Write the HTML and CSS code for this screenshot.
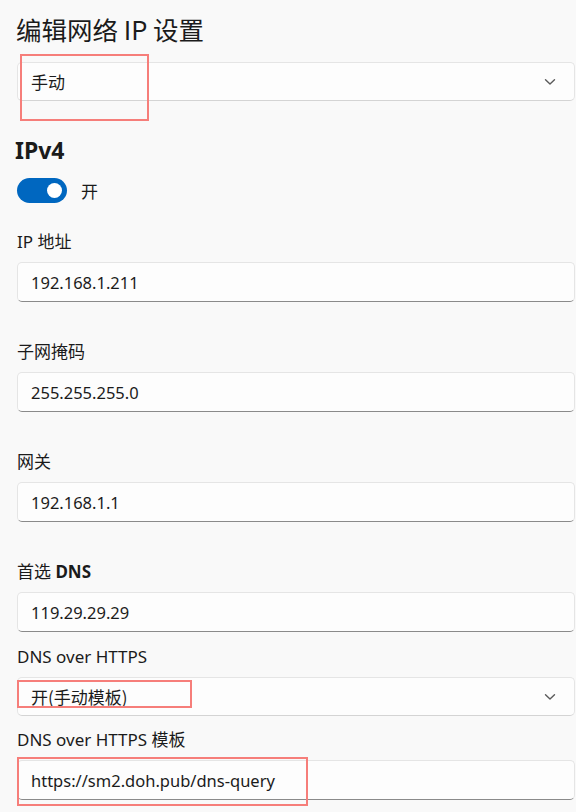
FILE: index.html
```html
<!DOCTYPE html>
<html lang="zh-CN">
<head>
<meta charset="utf-8">
<title>编辑网络 IP 设置</title>
<link rel="stylesheet" href="styles.css">
</head>
<body>
<div class="page">
  <h1 class="title">编辑网络 IP 设置</h1>
  <div class="combo combo-top">
    <span class="combo-text">手动</span>
    <svg class="chev" width="12" height="8" viewBox="0 0 12 8"><path d="M1.5 1.8 L6 6 L10.5 1.8" fill="none" stroke="#5a5a5a" stroke-width="1.4" stroke-linecap="round" stroke-linejoin="round"/></svg>
  </div>

  <h2 class="section">IPv4</h2>
  <div class="toggle-row">
    <span class="toggle"><span class="knob"></span></span>
    <span class="toggle-label">开</span>
  </div>

  <div class="field field-first">
    <div class="label">IP 地址</div>
    <div class="input">192.168.1.211</div>
  </div>
  <div class="field">
    <div class="label">子网掩码</div>
    <div class="input">255.255.255.0</div>
  </div>
  <div class="field">
    <div class="label">网关</div>
    <div class="input">192.168.1.1</div>
  </div>
  <div class="field">
    <div class="label">首选 <b>DNS</b></div>
    <div class="input">119.29.29.29</div>
  </div>
  <div class="field field-tight">
    <div class="label">DNS over HTTPS</div>
    <div class="combo">
      <span class="combo-text">开(手动模板)</span>
      <svg class="chev" width="12" height="8" viewBox="0 0 12 8"><path d="M1.5 1.8 L6 6 L10.5 1.8" fill="none" stroke="#5a5a5a" stroke-width="1.4" stroke-linecap="round" stroke-linejoin="round"/></svg>
    </div>
  </div>
  <div class="field field-last">
    <div class="label">DNS over HTTPS 模板</div>
    <div class="input">https://sm2.doh.pub/dns-query</div>
  </div>
</div>

<div class="mark mark-1"></div>
<div class="mark mark-2"></div>
<div class="mark mark-3"></div>
</body>
</html>
```

FILE: styles.css
```css
html, body {
  margin: 0;
  padding: 0;
  background: #f9f9f9;
}
body {
  font-family: "Noto Sans", "Noto Sans CJK SC", sans-serif;
  color: #1b1b1b;
  width: 576px;
  height: 812px;
  overflow: hidden;
  position: relative;
}
.page {
  padding: 10px 1px 0 17px;
  display: flex;
  flex-direction: column;
}
.title {
  margin: 0 0 0 -1px;
  font-family: "Noto Sans CJK SC", sans-serif;
  font-size: 25.5px;
  font-weight: 400;
  line-height: 38px;
  height: 38px;
}
.combo, .input {
  box-sizing: border-box;
  background: #fdfdfd;
  border: 1px solid #e5e5e5;
  border-radius: 5px;
  display: flex;
  align-items: center;
  padding: 0 0 0 13px;
  font-size: 16.5px;
  font-family: "Noto Sans", "Noto Sans CJK SC", sans-serif;
  color: #1b1b1b;
}
.combo {
  height: 39px;
  justify-content: space-between;
  padding-right: 18px;
  border-bottom-color: #d4d4d4;
}
.combo-top {
  margin-top: 14px;
}
.combo-text {
  font-family: "Noto Sans CJK SC", sans-serif;
  font-size: 17px;
}
.input {
  height: 40px;
  border-bottom: 1px solid #8a8a8a;
}
.section {
  margin: 35px 0 0 -2px;
  font-size: 23px;
  font-weight: 700;
  line-height: 28px;
  height: 28px;
  font-family: "Noto Sans", "Noto Sans CJK SC", sans-serif;
}
.toggle-row {
  display: flex;
  align-items: center;
  margin-top: 13px;
  height: 26px;
}
.toggle {
  width: 50px;
  height: 25px;
  border-radius: 13px;
  background: #0067c0;
  display: flex;
  align-items: center;
  justify-content: flex-end;
  padding-right: 5px;
  box-sizing: border-box;
}
.knob {
  width: 15px;
  height: 15px;
  border-radius: 50%;
  background: #ffffff;
}
.toggle-label {
  margin-left: 14px;
  font-size: 17px;
  font-family: "Noto Sans CJK SC", sans-serif;
}
.field {
  display: flex;
  flex-direction: column;
  margin-top: 38px;
}
.field-first {
  margin-top: 27px;
}
.field-tight {
  margin-top: 13px;
}
.field-last {
  margin-top: 12px;
}
.label {
  font-size: 17px;
  line-height: 24px;
  height: 24px;
  margin-bottom: 8px;
  font-family: "Noto Sans", "Noto Sans CJK SC", sans-serif;
}
.label b {
  font-weight: 700;
}
.chev {
  display: block;
}
.mark {
  position: absolute;
  border: 2px solid #f67e7a;
  box-sizing: border-box;
  pointer-events: none;
}
.mark-1 {
  left: 20px;
  top: 54px;
  width: 129px;
  height: 67px;
}
.mark-2 {
  left: 17px;
  top: 680px;
  width: 175px;
  height: 28px;
}
.mark-3 {
  left: 17px;
  top: 757px;
  width: 291px;
  height: 49px;
}
```
